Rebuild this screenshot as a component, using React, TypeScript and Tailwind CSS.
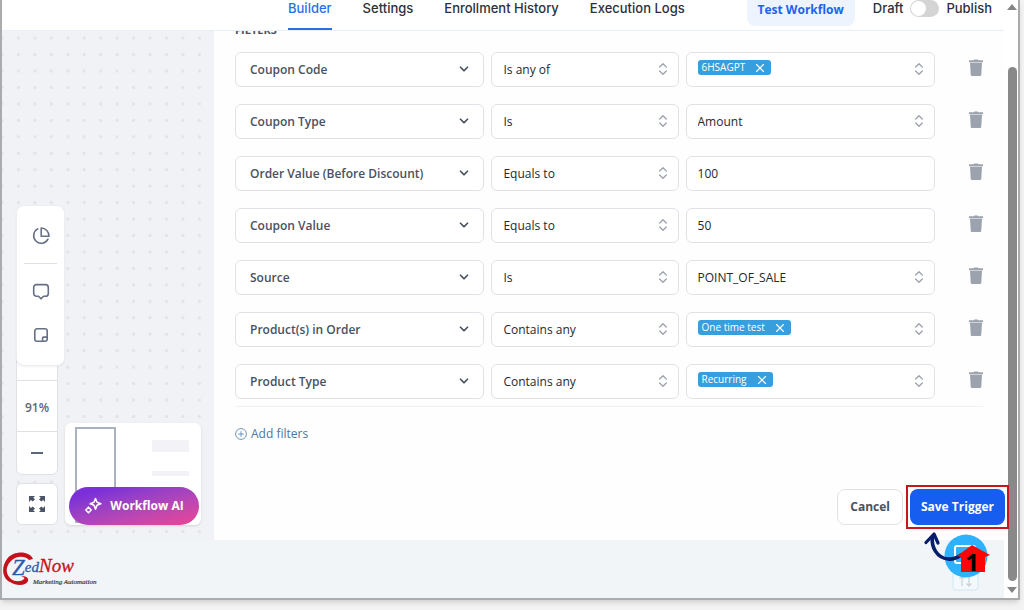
import React, { useState } from 'react';
import { ChevronDown, ChevronsUpDown, X } from 'lucide-react';

type ValueKind = 'tag' | 'select' | 'text';

interface FilterRow {
  id: string;
  field: string;
  operator: string;
  kind: ValueKind;
  value: string;
}

const INITIAL_FILTERS: FilterRow[] = [
  { id: 'coupon-code', field: 'Coupon Code', operator: 'Is any of', kind: 'tag', value: '6HSAGPT' },
  { id: 'coupon-type', field: 'Coupon Type', operator: 'Is', kind: 'select', value: 'Amount' },
  { id: 'order-value', field: 'Order Value (Before Discount)', operator: 'Equals to', kind: 'text', value: '100' },
  { id: 'coupon-value', field: 'Coupon Value', operator: 'Equals to', kind: 'text', value: '50' },
  { id: 'source', field: 'Source', operator: 'Is', kind: 'select', value: 'POINT_OF_SALE' },
  { id: 'products', field: 'Product(s) in Order', operator: 'Contains any', kind: 'tag', value: 'One time test' },
  { id: 'product-type', field: 'Product Type', operator: 'Contains any', kind: 'tag', value: 'Recurring' },
];

const TABS = ['Builder', 'Settings', 'Enrollment History', 'Execution Logs'];

function TrashIcon() {
  return (
    <svg width="14" height="18" viewBox="0 0 14 18" fill="#9ca3af" aria-hidden="true">
      <path d="M4.6 1.2 5.2.5h3.6l.6.7H14v2H0v-2z" />
      <path d="M1 3.8h12l-.7 11.6c0 .9-.7 1.6-1.6 1.6H3.3c-.9 0-1.6-.7-1.6-1.6z" />
    </svg>
  );
}

function Header() {
  const [active, setActive] = useState('Builder');
  const [published, setPublished] = useState(false);

  return (
    <header className="flex h-[31px] items-start justify-between whitespace-nowrap border-b border-[#e6f0f8] bg-white pl-[286px] pr-3 font-['Inter',sans-serif] text-[13px] font-medium text-[#2b303b]">
      <nav className="flex h-full gap-[31px]">
        {TABS.map((tab) => (
          <a
            key={tab}
            href="#"
            onClick={() => setActive(tab)}
            className={`h-[30px] border-b-2 leading-4 ${active === tab ? 'border-[#2970e8] text-[#2970e8]' : 'border-transparent'}`}
          >
            {tab}
          </a>
        ))}
      </nav>
      <div className="flex items-start">
        <button className="mr-[18px] h-[26px] rounded-b-lg bg-[#edf4fe] px-[11px] pb-3 pt-0.5 font-['Open_Sans',sans-serif] text-xs font-bold leading-4 text-[#1f62ee]">
          Test Workflow
        </button>
        <span className="leading-4">Draft</span>
        <input
          id="publish"
          type="checkbox"
          role="switch"
          checked={published}
          onChange={(e) => setPublished(e.target.checked)}
          className="mx-[7px] h-[17px] w-[29px] appearance-none rounded-full bg-[#d4d4d4] p-px before:block before:size-[15px] before:rounded-full before:bg-white checked:bg-blue-500 checked:before:translate-x-3"
        />
        <label htmlFor="publish" className="leading-4">Publish</label>
      </div>
    </header>
  );
}

function Canvas() {
  return (
    <section className="relative flex w-[212px] shrink-0 items-end gap-[7px] bg-[#f1f2f6] pb-[15px] pl-[14px] pr-[13px] font-['Open_Sans',sans-serif]">
      <svg className="absolute inset-0 size-full" aria-hidden="true">
        <defs>
          <pattern id="dots" x="-8.2" y="-1.1" width="16.45" height="16.45" patternUnits="userSpaceOnUse">
            <circle cx="8.2" cy="8.2" r="1.6" fill="#e2e3e6" />
          </pattern>
        </defs>
        <rect width="100%" height="100%" fill="url(#dots)" />
      </svg>

      <div className="relative flex w-[42px] flex-col gap-2">
        <div className="divide-y divide-[#dfe1e6] rounded-b-md border border-[#dfe1e6] bg-white">
          <div className="h-9" />
          <div className="flex h-[51px] items-center justify-center pt-1 text-xs font-semibold text-[#5d6675]">91%</div>
          <button aria-label="Zoom out" className="flex h-[42px] w-full items-center justify-center">
            <span className="h-0.5 w-3 bg-[#5d6675]" />
          </button>
        </div>
        <button aria-label="Fit to screen" className="flex h-[42px] items-center justify-center rounded-md border border-[#dfe1e6] bg-white">
          <svg width="16" height="16" viewBox="0 0 16 16" fill="#4b5565" aria-hidden="true">
            <path d="M0 0h6L4.3 1.7 6 3.4 3.6 5.6 1.9 4 0 6z" />
            <path d="M16 0v6l-1.9-2-1.7 1.6L10 3.4l1.7-1.7L10 0z" />
            <path d="M0 16v-6l1.9 2 1.7-1.6L6 12.6l-1.7 1.7L6 16z" />
            <path d="M16 16h-6l1.7-1.7-1.7-1.7 2.4-2.2L14.1 12l1.9-2z" />
          </svg>
        </button>
      </div>

      <div className="absolute bottom-[174px] left-[14px] flex w-[49px] flex-col items-center rounded-lg border border-[#eceef2] bg-white pb-[22px] pt-[21px] shadow-xs">
        <button aria-label="Stats">
          <svg width="18" height="18" viewBox="0 0 18 18" fill="none" stroke="#667085" strokeWidth="1.6" strokeLinecap="round" strokeLinejoin="round" aria-hidden="true">
            <path d="M5.8 1.9A7.6 7.6 0 1 0 16 12.2" />
            <path d="M9.2 1v8.2H17A8 8 0 0 0 9.2 1z" />
          </svg>
        </button>
        <span className="my-[18px] h-px w-[33px] bg-[#dfe1e6]" />
        <button aria-label="Comments" className="mt-px">
          <svg width="18" height="18" viewBox="0 0 18 18" fill="none" stroke="#667085" strokeWidth="1.6" strokeLinejoin="round" aria-hidden="true">
            <path d="M4.5 1.6h9a2.8 2.8 0 0 1 2.8 2.8v6a2.8 2.8 0 0 1-2.8 2.8h-2L9 15.8l-2.5-2.6h-2a2.8 2.8 0 0 1-2.8-2.8v-6a2.8 2.8 0 0 1 2.8-2.8z" />
          </svg>
        </button>
        <button aria-label="Sticky note" className="mt-[26px]">
          <svg width="16" height="16" viewBox="0 0 16 16" fill="none" stroke="#667085" strokeWidth="1.6" strokeLinejoin="round" aria-hidden="true">
            <path d="M9.6 14.2H4a2.2 2.2 0 0 1-2.2-2.2V4A2.2 2.2 0 0 1 4 1.8h8A2.2 2.2 0 0 1 14.2 4v6M9.6 14.2v-3.1a1 1 0 0 1 1-1h3.6M9.6 14.2H12a2.2 2.2 0 0 0 2.2-2.2v-2" />
          </svg>
        </button>
      </div>

      <div className="relative h-[102px] flex-1 rounded-md bg-white pl-2.5 pr-3 pt-1 shadow">
        <div className="flex justify-between">
          <div className="h-[96px] w-[41px] border-2 border-[#aab2bd]" />
          <div className="flex w-[37px] flex-col gap-[19px] pt-[13px]">
            <span className="h-3 bg-[#f3f3f7]" />
            <span className="h-[5px] bg-[#f3f3f7]" />
          </div>
        </div>
        <button className="absolute inset-x-0 bottom-0 ml-1 mr-0.5 flex h-[38px] items-center justify-center gap-2 whitespace-nowrap rounded-full bg-linear-165 from-[#7a2fd8] from-15% to-[#e0459c] to-90% text-xs font-bold text-white">
          <svg width="18" height="18" viewBox="0 0 18 18" fill="none" stroke="#ffffff" strokeWidth="1.6" strokeLinejoin="round" aria-hidden="true">
            <path d="M11.5 1.5 13 5.3l3.8 1.5L13 8.3l-1.5 3.8L10 8.3 6.2 6.8 10 5.3z" />
            <path d="M4.5 10.2 7.2 13l-2.7 2.8L1.8 13z" />
          </svg>
          Workflow AI
        </button>
      </div>
    </section>
  );
}

interface SelectBoxProps {
  label: string;
  value: string;
  field?: boolean;
}

function SelectBox({ label, value, field }: SelectBoxProps) {
  return (
    <div className="relative">
      <select
        aria-label={label}
        defaultValue={value}
        className={`h-[35px] w-full appearance-none rounded-md border border-[#dfe2e7] bg-white pr-8 ${field ? 'pl-3.5 font-semibold text-[#4a5160]' : 'pl-[11px] text-[#24282f]'}`}
      >
        <option>{value}</option>
      </select>
      {field ? (
        <ChevronDown className="pointer-events-none absolute right-[13px] top-2.5 size-3.5 text-[#4a5160]" strokeWidth={3} />
      ) : (
        <ChevronsUpDown className="pointer-events-none absolute right-2 top-[9px] size-4 text-[#9ca3af]" />
      )}
    </div>
  );
}

function ValueField({ row }: { row: FilterRow }) {
  const [tag, setTag] = useState(row.value);

  if (row.kind === 'select') return <SelectBox label={`${row.field} value`} value={row.value} />;
  if (row.kind === 'text') {
    return (
      <input
        type="text"
        aria-label={`${row.field} value`}
        defaultValue={row.value}
        className="h-[35px] w-full min-w-0 rounded-md border border-[#dfe2e7] bg-white px-[11px] text-[#24282f]"
      />
    );
  }
  return (
    <div className="flex h-[35px] items-start justify-between rounded-md border border-[#dfe2e7] bg-white pl-[11px] pr-[7px] pt-[7px]">
      {tag && (
        <span className="flex h-[15px] items-center gap-2 rounded-[3px] bg-[#379fde] px-1 text-[10px] text-white">
          {tag}
          <button aria-label={`Remove ${tag}`} onClick={() => setTag('')}>
            <X className="size-3.5" strokeWidth={2} />
          </button>
        </span>
      )}
      <ChevronsUpDown className="ml-auto mt-px size-4 text-[#9ca3af]" />
    </div>
  );
}

function TriggerPanel() {
  const [filters, setFilters] = useState(INITIAL_FILTERS);

  return (
    <section className="flex min-w-0 flex-1 flex-col overflow-hidden bg-[#fefefe] font-['Open_Sans',sans-serif] text-xs">
      <div className="px-[21px]">
        <h2 className="-mt-[9px] text-[11px] font-bold leading-4 text-[#4a5160]">FILTERS</h2>
        <div className="flex flex-col gap-[17px] border-b border-[#f0f1f4] pb-[7px] pt-[14px]">
          {filters.map((row) => (
            <div key={row.id} className="grid grid-cols-[4fr_3fr_4fr_auto] gap-[7px]">
              <SelectBox label="Filter field" value={row.field} field />
              <SelectBox label={`${row.field} operator`} value={row.operator} />
              <ValueField row={row} />
              <button
                aria-label={`Delete ${row.field}`}
                onClick={() => setFilters(filters.filter((f) => f.id !== row.id))}
                className="pb-1 pl-[27px]"
              >
                <TrashIcon />
              </button>
            </div>
          ))}
        </div>
        <button className="mt-[17px] flex items-center gap-1 leading-5 text-[#4f7599]">
          <svg width="12" height="12" viewBox="0 0 12 12" fill="none" stroke="#6f95bb" aria-hidden="true">
            <circle cx="6" cy="6" r="5.4" />
            <path d="M6 3.2v5.6M3.2 6h5.6" />
          </svg>
          Add filters
        </button>
      </div>
    </section>
  );
}

function PanelActions() {
  return (
    <div className="absolute -right-px bottom-[15px] flex gap-[7px] font-['Open_Sans',sans-serif] text-xs font-bold">
      <button className="h-9 rounded-lg border border-[#dfe2e7] bg-white px-3 text-[#4a5160]">Cancel</button>
      <div className="relative">
        <button className="h-9 whitespace-nowrap rounded-lg bg-[#155eef] px-[11px] text-white">Save Trigger</button>
        <span className="pointer-events-none absolute -inset-1 border-2 border-[#c8161d]" />
      </div>
    </div>
  );
}

function Logo() {
  return (
    <svg width="100" height="38" viewBox="0 0 100 38" role="img" aria-label="ZedNow Marketing Automation">
      <path d="M30 8C27 0 11-1 4 8-2 16-1 27 7 31c6 4 16 4 18-1 1-3-2-5-7-5 3 1 4 2 3 3-3 3-9 3-13 0C3 24 2 17 7 11 12 5 21 4 26 9z" fill="#c4121a" />
      <text y="24" fontFamily="Liberation Serif, serif" fontStyle="italic" fill="#2c5aa8" stroke="#2c5aa8" strokeWidth="0.3">
        <tspan x="9" fontSize="23">Z</tspan>
        <tspan y="21" fontSize="15">ed</tspan>
        <tspan y="21" fontSize="19" fill="#c4121a" stroke="#c4121a">Now</tspan>
      </text>
      <text x="30" y="33" fontFamily="Liberation Serif, serif" fontStyle="italic" fontSize="7" fill="#3a3a3a" stroke="#3a3a3a" strokeWidth="0.2">Marketing Automation</text>
    </svg>
  );
}

function ChatCallout() {
  return (
    <svg className="absolute -top-3 right-0" width="86" height="66" viewBox="0 0 86 66" role="img" aria-label="Chat, step 1">
      <rect x="35" y="40" width="25" height="22" rx="3" fill="#f3f9fd" stroke="#cfe6f5" />
      <path d="M44 58V48M41.5 50.5 44 48l2.5 2.5M51 48v10M48.5 55.5 51 58l2.5-2.5" fill="none" stroke="#c9d3dc" strokeWidth="1.3" />
      <circle cx="48" cy="28" r="21.5" fill="#2fb2fd" />
      <rect x="37" y="18" width="20" height="17" rx="2" fill="none" stroke="#fff" strokeWidth="2" />
      <g stroke="#051d6b" fill="none" strokeLinecap="round" strokeLinejoin="round">
        <path d="M14.500 9C13 19 19 30 30 31c5 .5 9-1 13-4" strokeWidth="3.600" />
        <path d="M8 14.500 16 6l4 9" strokeWidth="3.200" />
      </g>
      <path d="M54 17 72 27l-5 2v15H43V29l-4-1z" fill="#fb0505" />
      <text x="54" y="43" textAnchor="middle" fontFamily="Open Sans, sans-serif" fontWeight="bold" fontSize="24" fill="#000">1</text>
    </svg>
  );
}

function Scrollbar() {
  return (
    <div className="flex w-[14px] shrink-0 flex-col items-center bg-white pb-[5px] pl-0.5 pt-1" aria-hidden="true">
      <svg width="10" height="6" viewBox="0 0 10 6" fill="#858585"><path d="M5 0l5 6H0z" /></svg>
      <div className="mb-1.5 mt-[57px] w-[9px] flex-1 rounded-full bg-[#898989]" />
      <svg width="10" height="6" viewBox="0 0 10 6" fill="#858585"><path d="M5 6l5-6H0z" /></svg>
    </div>
  );
}

export default function App() {
  return (
    <div className="flex min-h-screen overflow-hidden bg-[#f3f3f3] pb-2.5 pr-1">
      <div className="flex min-w-0 flex-1 border-x-2 border-b-2 border-[#a9abad] shadow-md">
        <div className="flex min-w-0 flex-1 flex-col">
          <Header />
          <main className="relative flex flex-1">
            <Canvas />
            <TriggerPanel />
            <PanelActions />
          </main>
          <footer className="relative z-10 h-[58px] bg-[#f1f5f8] pl-px pt-[11px]">
            <Logo />
            <ChatCallout />
          </footer>
        </div>
        <Scrollbar />
      </div>
    </div>
  );
}
